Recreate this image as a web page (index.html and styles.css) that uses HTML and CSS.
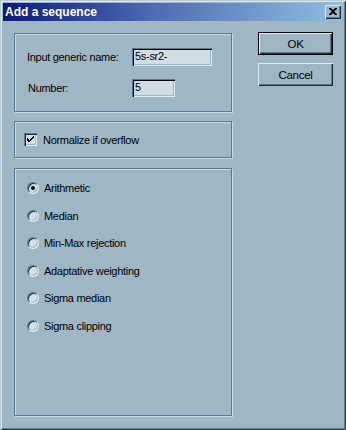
FILE: index.html
```html
<!DOCTYPE html>
<html>
<head>
<meta charset="utf-8">
<link rel="stylesheet" href="styles.css">
</head>
<body>
<div class="window">
  <div class="titlebar">
    <span class="title">Add a sequence</span>
    <div class="close">
      <svg width="8" height="7" viewBox="0 0 8 7"><path d="M0 0h2l2 2 2-2h2v1L5 3.5 8 6v1H6L4 5 2 7H0V6l3-2.5L0 1z" fill="#000"/></svg>
    </div>
  </div>
  <div class="content">
    <div class="left">
      <div class="group g1">
        <div class="row r1">
          <span class="label">Input generic name:</span>
          <div class="input wide">5s-sr2-</div>
        </div>
        <div class="row r2">
          <span class="label">Number:</span>
          <div class="input narrow">5</div>
        </div>
      </div>
      <div class="group g2">
        <div class="check-row">
          <div class="checkbox">
            <svg width="7" height="7" viewBox="0 0 7 7"><path d="M0 2h1v1h1v1h1V3h1V2h1V1h1V0h1v2H6v1H5v1H4v1H3v1H2V6H1V5H0z" fill="#000"/></svg>
          </div>
          <span class="text">Normalize if overflow</span>
        </div>
      </div>
      <div class="group g3">
        <div class="radio-row"><span class="radio checked"></span><span class="text">Arithmetic</span></div>
        <div class="radio-row"><span class="radio"></span><span class="text">Median</span></div>
        <div class="radio-row"><span class="radio"></span><span class="text">Min-Max rejection</span></div>
        <div class="radio-row"><span class="radio"></span><span class="text">Adaptative weighting</span></div>
        <div class="radio-row"><span class="radio"></span><span class="text">Sigma median</span></div>
        <div class="radio-row"><span class="radio"></span><span class="text">Sigma clipping</span></div>
      </div>
    </div>
    <div class="right">
      <div class="btn default"><span>OK</span></div>
      <div class="btn"><span>Cancel</span></div>
    </div>
  </div>
</div>
</body>
</html>
```
FILE: styles.css
```css
html, body {
  margin: 0;
  padding: 0;
  background: #9fb7c5;
}
body {
  font-family: "Liberation Sans", Arial, sans-serif;
  font-size: 11px;
  letter-spacing: -0.3px;
  color: #000;
}
.window {
  width: 346px;
  height: 430px;
  box-sizing: border-box;
  padding: 3px;
  background: #9fb7c5;
  box-shadow:
    inset 1px 1px 0 #b8ccd8,
    inset -1px -1px 0 #2e4450,
    inset 2px 2px 0 #dde9f0,
    inset -2px -2px 0 #5e7e90;
}
.titlebar {
  height: 18px;
  background: linear-gradient(to right, #0a1a80 0%, #4d6db4 45%, #90bfe0 100%);
  display: flex;
  align-items: center;
  justify-content: space-between;
  padding: 0 2px;
}
.title {
  color: #fff;
  font-weight: bold;
  font-size: 12px;
  letter-spacing: 0;
}
.close {
  width: 16px;
  height: 14px;
  box-sizing: border-box;
  background: #9fb7c5;
  box-shadow:
    inset 1px 1px 0 #dde9f0,
    inset -1px -1px 0 #1e2e38,
    inset -2px -2px 0 #5e7e90;
  display: flex;
  align-items: center;
  justify-content: center;
  padding-bottom: 1px;
}
.content {
  display: flex;
  padding: 12px 0 0 11px;
}
.left {
  width: 218px;
  display: flex;
  flex-direction: column;
}
.group {
  box-sizing: border-box;
  border: 1px solid #587a90;
  box-shadow: 1px 1px 0 #c8dae4, inset 1px 1px 0 #c8dae4;
}
.g1 {
  height: 79px;
  padding: 14px 0 0 12px;
}
.g2 {
  height: 37px;
  margin-top: 9px;
  padding: 11px 0 0 9px;
}
.g3 {
  height: 248px;
  margin-top: 10px;
  padding: 12px 0 0 12px;
  display: flex;
  flex-direction: column;
  gap: 13.6px;
}
.row {
  display: flex;
  align-items: center;
}
.r2 {
  margin-top: 13px;
}
.label {
  width: 105px;
}
.r2 .label {
  padding-left: 1px;
  width: 104px;
}
.input {
  box-sizing: border-box;
  height: 18px;
  background: #d0dde4;
  padding: 1px 0 0 3px;
  line-height: 14px;
  box-shadow:
    inset 1px 1px 0 #587a90,
    inset 2px 2px 0 #000,
    inset -1px -1px 0 #e0ecf2,
    inset -2px -2px 0 #9fb7c5;
}
.wide { width: 80px; }
.narrow { width: 43px; }
.check-row {
  display: flex;
  align-items: center;
  height: 13px;
}
.checkbox {
  width: 13px;
  height: 13px;
  box-sizing: border-box;
  background: #d4e0e6;
  box-shadow:
    inset 1px 1px 0 #587a90,
    inset 2px 2px 0 #1e2e38,
    inset -1px -1px 0 #e4eef4,
    inset -2px -2px 0 #9fb7c5;
  display: flex;
  align-items: center;
  justify-content: center;
}
.check-row .text {
  margin-left: 6px;
}
.radio-row {
  display: flex;
  align-items: center;
  height: 14px;
}
.radio {
  width: 12px;
  height: 12px;
  box-sizing: border-box;
  border-radius: 50%;
  background: #d4e0e6;
  border: 1px solid;
  border-color: #587a90 #e4eef4 #e4eef4 #587a90;
  box-shadow: inset 1px 1px 0 #1e2e38, inset -1px -1px 0 #9fb7c5;
  position: relative;
}
.radio.checked::after {
  content: "";
  position: absolute;
  left: 3px;
  top: 3px;
  width: 4px;
  height: 4px;
  border-radius: 50%;
  background: #000;
}
.radio-row .text {
  margin-left: 5px;
}
.right {
  margin-left: 26px;
  margin-top: -1px;
  display: flex;
  flex-direction: column;
  gap: 8px;
}
.btn {
  width: 75px;
  height: 23px;
  box-sizing: border-box;
  background: #9fb7c5;
  display: flex;
  align-items: center;
  justify-content: center;
  box-shadow:
    inset 1px 1px 0 #e0ecf2,
    inset -1px -1px 0 #1e2e38,
    inset -2px -2px 0 #587a90;
  font-size: 11.5px;
}
.btn.default {
  border: 1px solid #000;
}
```
